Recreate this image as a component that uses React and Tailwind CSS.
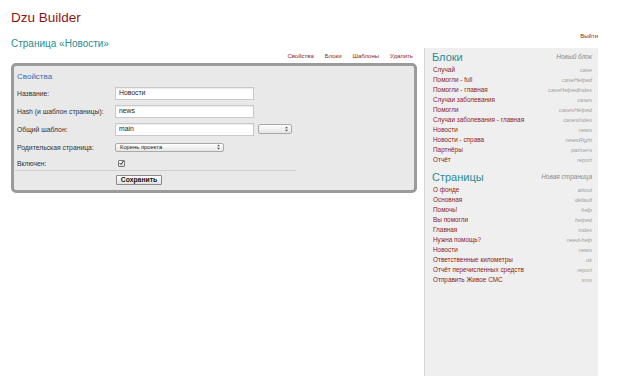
const BLOCKS = [
  ["Случай", "case"],
  ["Помогли - full", "caseHelped"],
  ["Помогли - главная", "caseHelpedIndex"],
  ["Случаи заболевания", "cases"],
  ["Помогли", "casesHelped"],
  ["Случаи заболевания - главная", "casesIndex"],
  ["Новости", "news"],
  ["Новости - справа", "newsRight"],
  ["Партнёры", "partners"],
  ["Отчёт", "report"],
];

const PAGES = [
  ["О фонде", "about"],
  ["Основная", "default"],
  ["Помочь!", "help"],
  ["Вы помогли", "helped"],
  ["Главная", "index"],
  ["Нужна помощь?", "need-help"],
  ["Новости", "news"],
  ["Ответственные километры", "ok"],
  ["Отчёт перечисленных средств", "report"],
  ["Отправить Живое СМС", "sms"],
];

function SideList({ title, action, items }) {
  return (
    <div>
      <div className="flex items-center justify-between">
        <h3 className="text-[11px] leading-[14px] text-[#2a8d92]">{title}</h3>
        <span className="text-[6.5px] italic text-[#8a8a8a]">{action}</span>
      </div>
      <ul className="mt-[1px]">
        {items.map(([name, code]) => (
          <li key={name + code} className="flex h-[10px] items-center justify-between">
            <span className="pl-[1px] text-[6.4px] text-[#8c1c24]">{name}</span>
            <span className="text-[5.7px] italic text-[#a0a0a0]">{code}</span>
          </li>
        ))}
      </ul>
    </div>
  );
}

function Arrows() {
  return (
    <svg width="3" height="6" viewBox="0 0 3 6" className="shrink-0">
      <path d="M0 2.2 L1.5 0.5 L3 2.2 Z M0 3.8 L1.5 5.5 L3 3.8 Z" fill="#555" />
    </svg>
  );
}

function Field({ label, children, h = "h-[18px]" }) {
  return (
    <div className={`flex items-center ${h}`}>
      <label className="w-[100px] pl-[2px] text-[6.8px] leading-[9px] text-[#333]">{label}</label>
      {children}
    </div>
  );
}

function TextInput({ value }) {
  return (
    <div className="flex h-[13px] w-[139px] items-center border border-[#c9c9c9] bg-white px-[3px] text-[6.8px] text-[#222] shadow-[inset_0_1px_1px_rgba(0,0,0,0.08)]">
      {value}
    </div>
  );
}

export default function App() {
  return (
    <div className="h-[390px] w-[620px] overflow-hidden bg-white font-['Liberation_Sans',Arial,sans-serif]">
      <h1 className="pl-[11px] pt-[10px] text-[13.5px] leading-[16px] text-[#8d1414]">Dzu Builder</h1>
      <div className="flex items-start">
        <main className="ml-[11px] w-[406px]">
          <h2 className="mt-[12px] text-[10px] leading-[12px] text-[#2a8d92]">Страница «Новости»</h2>
          <nav className="mt-[2px] flex justify-end gap-[11px] pr-[4px] text-[6px] leading-[8px] text-[#8c1c24]">
            <a>Свойства</a>
            <a>Блоки</a>
            <a>Шаблоны</a>
            <a>Удалить</a>
          </nav>
          <section className="mt-[3px] h-[130px] rounded-[5px] border-[3px] border-[#9b9b9b] bg-[#e9e9e9] pt-[6px]">
            <div className="pl-[3px] text-[8px] leading-[10px] text-[#3d6fae]">Свойства</div>
            <div className="ml-[1px] mt-[2px] w-[281px]">
              <Field label="Название:">
                <TextInput value="Новости" />
              </Field>
              <Field label="Hash (и шаблон страницы):">
                <TextInput value="news" />
              </Field>
              <Field label="Общий шаблон:">
                <TextInput value="main" />
                <div className="ml-[4px] flex h-[10px] w-[34px] items-center justify-end rounded-[2px] border border-[#aaa] bg-gradient-to-b from-white to-[#e4e4e4] pr-[3px]">
                  <Arrows />
                </div>
              </Field>
              <Field label="Родительская страница:">
                <div className="flex h-[9px] w-[109px] items-center justify-between rounded-[2px] border border-[#aaa] bg-gradient-to-b from-white to-[#e6e6e6] pl-[4px] pr-[3px] text-[5.8px] text-[#222]">
                  <span>Корень проекта</span>
                  <Arrows />
                </div>
              </Field>
              <Field label="Включен:" h="h-[14px]">
                <div className="ml-[3px] flex h-[7px] w-[7px] items-center justify-center rounded-[1px] border border-[#777] bg-gradient-to-b from-white to-[#ddd]">
                  <svg width="6" height="6" viewBox="0 0 6 6">
                    <path d="M0.8 3.2 L2.4 4.8 L5.4 0.6" fill="none" stroke="#222" strokeWidth="1.2" />
                  </svg>
                </div>
              </Field>
              <div className="flex border-t border-[#cfcfcf] pl-[101px] pt-[4px]">
                <button className="h-[10px] w-[46px] rounded-[1px] border border-[#8a8a8a] bg-gradient-to-b from-white to-[#e2e2e2] text-[6.8px] font-bold leading-[8px] text-[#111]">
                  Сохранить
                </button>
              </div>
            </div>
          </section>
        </main>
        <div className="ml-[7px] w-[174px]">
          <div className="mt-[6px] flex justify-end">
            <a className="text-[6px] leading-[8px] text-[#8c1c24]">Выйти</a>
          </div>
          <aside className="mt-[8px] h-[328px] border-l border-[#d4d4d4] bg-[#efefef] pl-[7px] pr-[6px] pt-[2px]">
            <SideList title="Блоки" action="Новый блок" items={BLOCKS} />
            <div className="mt-[5px]">
              <SideList title="Страницы" action="Новая страница" items={PAGES} />
            </div>
          </aside>
        </div>
      </div>
    </div>
  );
}
